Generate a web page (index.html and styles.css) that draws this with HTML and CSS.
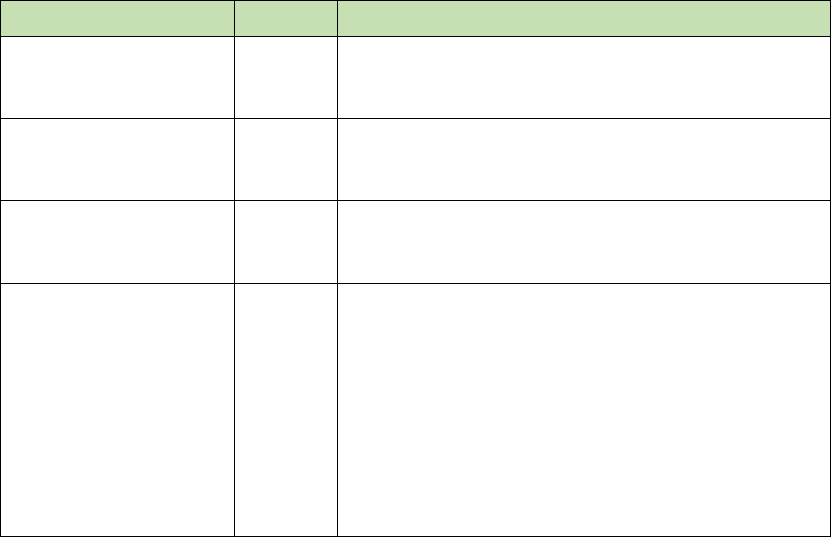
FILE: index.html
```html
<!DOCTYPE html>
<html lang="en">
<head>
<meta charset="utf-8">
<title>Table</title>
<link rel="stylesheet" href="styles.css">
</head>
<body>
<div class="sheet">
  <div class="cell head"></div>
  <div class="cell head"></div>
  <div class="cell head"></div>

  <div class="cell"></div>
  <div class="cell"></div>
  <div class="cell"></div>

  <div class="cell"></div>
  <div class="cell"></div>
  <div class="cell"></div>

  <div class="cell"></div>
  <div class="cell"></div>
  <div class="cell"></div>

  <div class="cell"></div>
  <div class="cell"></div>
  <div class="cell"></div>
</div>
</body>
</html>
```
FILE: styles.css
```css
html, body {
  margin: 0;
  padding: 0;
  background: #ffffff;
  font-family: "Liberation Sans", Arial, sans-serif;
}

.sheet {
  width: 831px;
  height: 537px;
  box-sizing: border-box;
  display: grid;
  grid-template-columns: 233px 102px 492px;
  grid-template-rows: 35px 81px 81px 82px 252px;
  gap: 1px;
  padding: 1px;
  background: #000000;
}

.cell {
  background: #ffffff;
}

.cell.head {
  background: #c6e0b4;
}
```
